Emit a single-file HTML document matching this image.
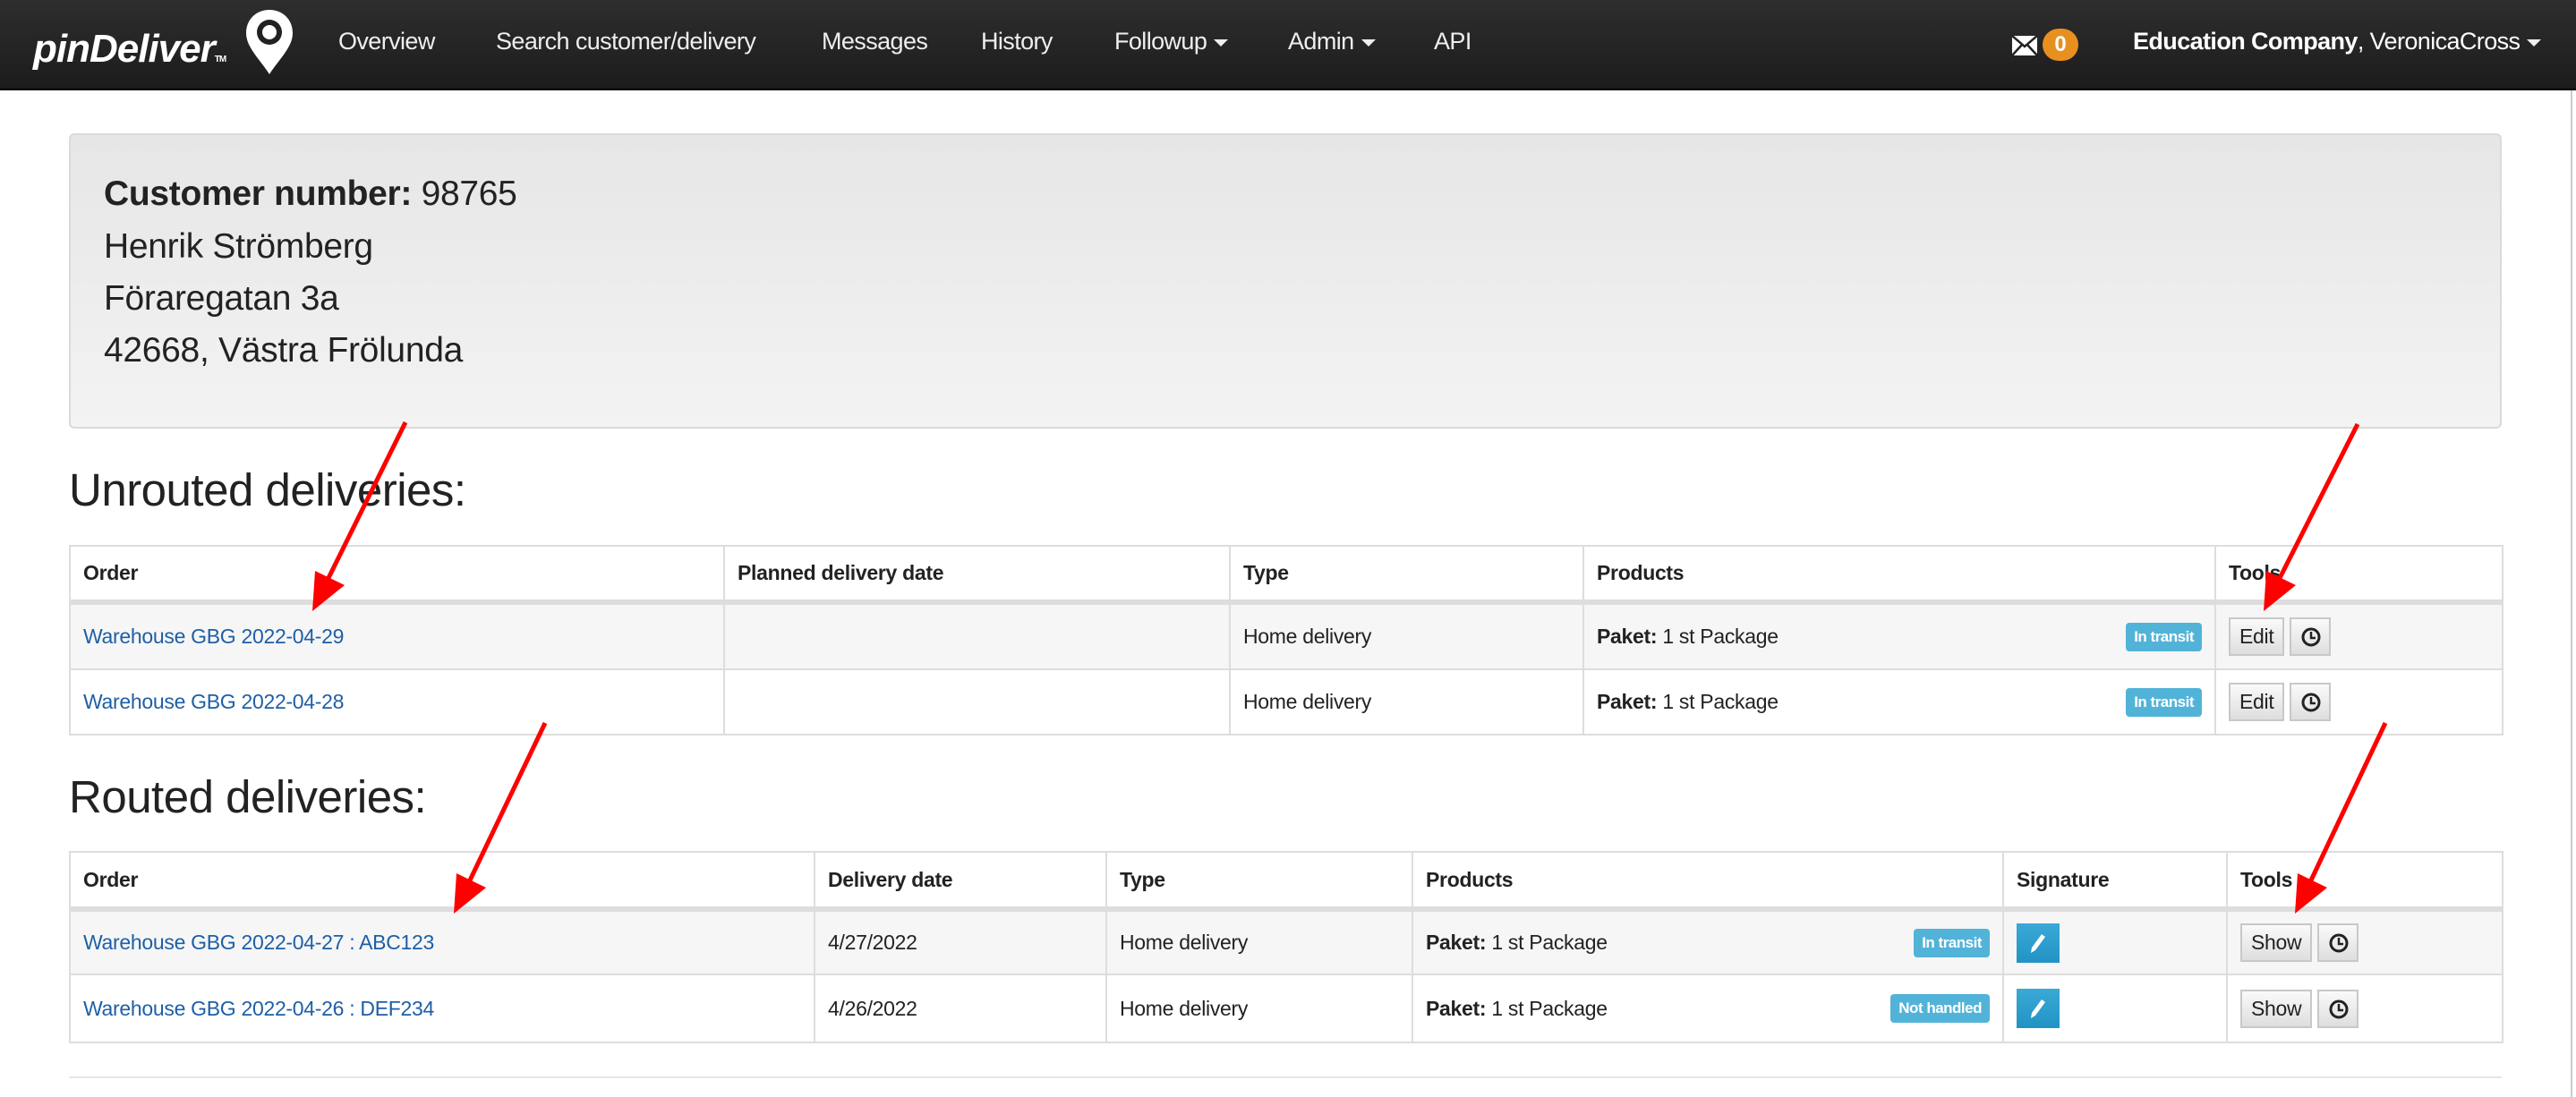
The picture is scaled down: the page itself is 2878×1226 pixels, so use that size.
<!DOCTYPE html>
<html><head><meta charset="utf-8"><style>
*{box-sizing:border-box;margin:0;padding:0}
body{width:2878px;height:1226px;background:#fff;font-family:"Liberation Sans",sans-serif;color:#222;position:relative;overflow:hidden}
.nav{position:absolute;left:0;top:0;width:2878px;height:101px;background:linear-gradient(#2e2e2e,#1c1c1c);border-bottom:2px solid #000}
.nav .it{position:absolute;top:31px;font-size:27px;color:#eee;letter-spacing:-0.6px}
.caret{display:inline-block;width:0;height:0;border-left:8px solid transparent;border-right:8px solid transparent;border-top:8px solid #eee;vertical-align:middle;margin-left:8px}
.logo{position:absolute;left:37px;top:30px;font-size:44px;font-weight:bold;font-style:italic;color:#fff;letter-spacing:-1px}
.well{position:absolute;left:77px;top:149px;width:2718px;height:330px;background:linear-gradient(#e6e6e6,#f3f3f3);border:2px solid #dadada;border-radius:6px}
.well div{position:absolute;left:37px;font-size:39px;color:#222;letter-spacing:-0.3px}
h2{position:absolute;left:77px;font-size:51px;font-weight:normal;color:#222;letter-spacing:-0.5px}
table{position:absolute;left:77px;width:2718px;border-collapse:collapse;table-layout:fixed;font-size:23px;letter-spacing:-0.3px}
td,th{border:2px solid #ddd;padding:0 14px;text-align:left;vertical-align:middle;white-space:nowrap;position:relative}
th{font-weight:bold;border-bottom-width:6px}
a{color:#1e5fa6;text-decoration:none}
.lbl{position:absolute;right:14px;top:50%;transform:translateY(-50%);background:#52b3d9;color:#fff;font-weight:bold;font-size:17px;padding:6px 9px;border-radius:4px;letter-spacing:-0.5px}
.btn{display:inline-block;height:43px;line-height:39px;border:2px solid #c8c8c8;background:linear-gradient(#fafafa,#dedede);font-size:23px;padding:0 10px;vertical-align:middle;color:#222}
.clk{display:inline-block;width:46px;height:43px;border:2px solid #c8c8c8;background:linear-gradient(#fafafa,#dedede);vertical-align:middle;margin-left:6px;position:relative}
.clk svg{position:absolute;left:11px;top:9px}
.pen{display:inline-block;width:48px;height:44px;background:linear-gradient(#3aa9d6,#2193c4);vertical-align:middle;position:relative}
.pen svg{position:absolute;left:12px;top:9px}
</style></head><body>
<div class="nav">
 <div class="logo">pinDeliver<span style="font-size:10px;font-style:normal">TM</span></div>
 <svg style="position:absolute;left:272px;top:9px" width="58" height="76" viewBox="0 0 58 76"><path d="M29 2C14 2 3 13 3 28c0 16 16 30 26 46C39 58 55 44 55 28 55 13 44 2 29 2z" fill="#fff"/><circle cx="29" cy="27" r="14" fill="#222"/><circle cx="29" cy="27" r="8" fill="#fff"/></svg>
 <span class="it" style="left:378px">Overview</span>
 <span class="it" style="left:554px">Search customer/delivery</span>
 <span class="it" style="left:918px">Messages</span>
 <span class="it" style="left:1096px">History</span>
 <span class="it" style="left:1245px">Followup<span class="caret"></span></span>
 <span class="it" style="left:1439px">Admin<span class="caret"></span></span>
 <span class="it" style="left:1602px">API</span>
 <svg style="position:absolute;left:2248px;top:40px" width="28" height="22" viewBox="0 0 28 22"><rect x="0" y="0" width="28" height="22" fill="#fff"/><path d="M0 0L14 12L28 0M0 22L11 10M28 22L17 10" stroke="#222" stroke-width="2.5" fill="none"/></svg>
 <span style="position:absolute;left:2282px;top:32px;width:40px;height:36px;border-radius:18px;background:#e8901f;color:#fff;font-weight:bold;font-size:24px;text-align:center;line-height:36px">0</span>
 <span class="it" style="left:2383px;color:#fff"><b>Education Company</b>, VeronicaCross<span class="caret"></span></span>
</div>
<div style="position:absolute;left:2872px;top:101px;width:2px;height:1125px;background:#ccc"></div>

<div class="well">
 <div style="top:44px"><b>Customer number:</b> 98765</div>
 <div style="top:103px">Henrik Strömberg</div>
 <div style="top:161px">Föraregatan 3a</div>
 <div style="top:219px">42668, Västra Frölunda</div>
</div>

<h2 style="top:518px">Unrouted deliveries:</h2>
<table style="top:609px">
<colgroup><col style="width:731px"><col style="width:565px"><col style="width:395px"><col style="width:706px"><col style="width:321px"></colgroup>
<tr style="height:63px"><th>Order</th><th>Planned delivery date</th><th>Type</th><th>Products</th><th>Tools</th></tr>
<tr style="height:75px;background:#f6f6f6"><td><a>Warehouse GBG 2022-04-29</a></td><td></td><td>Home delivery</td><td><b>Paket:</b> 1 st Package<span class="lbl">In transit</span></td><td><span class="btn">Edit</span><span class="clk"><svg width="22" height="22" viewBox="0 0 22 22"><circle cx="11" cy="11" r="9" fill="none" stroke="#222" stroke-width="3"/><path d="M11 5v7h5" fill="none" stroke="#222" stroke-width="2.5"/></svg></span></td></tr>
<tr style="height:73px"><td><a>Warehouse GBG 2022-04-28</a></td><td></td><td>Home delivery</td><td><b>Paket:</b> 1 st Package<span class="lbl">In transit</span></td><td><span class="btn">Edit</span><span class="clk"><svg width="22" height="22" viewBox="0 0 22 22"><circle cx="11" cy="11" r="9" fill="none" stroke="#222" stroke-width="3"/><path d="M11 5v7h5" fill="none" stroke="#222" stroke-width="2.5"/></svg></span></td></tr>
</table>

<h2 style="top:861px">Routed deliveries:</h2>
<table style="top:951px">
<colgroup><col style="width:832px"><col style="width:326px"><col style="width:342px"><col style="width:660px"><col style="width:250px"><col style="width:308px"></colgroup>
<tr style="height:64px"><th>Order</th><th>Delivery date</th><th>Type</th><th>Products</th><th>Signature</th><th>Tools</th></tr>
<tr style="height:73px;background:#f6f6f6"><td><a>Warehouse GBG 2022-04-27 : ABC123</a></td><td>4/27/2022</td><td>Home delivery</td><td><b>Paket:</b> 1 st Package<span class="lbl">In transit</span></td><td><span class="pen"><svg width="24" height="26" viewBox="0 0 24 26"><path d="M16 3l4 3-11 15-5 3 1-6z" fill="#fff"/></svg></span></td><td><span class="btn">Show</span><span class="clk"><svg width="22" height="22" viewBox="0 0 22 22"><circle cx="11" cy="11" r="9" fill="none" stroke="#222" stroke-width="3"/><path d="M11 5v7h5" fill="none" stroke="#222" stroke-width="2.5"/></svg></span></td></tr>
<tr style="height:76px"><td><a>Warehouse GBG 2022-04-26 : DEF234</a></td><td>4/26/2022</td><td>Home delivery</td><td><b>Paket:</b> 1 st Package<span class="lbl">Not handled</span></td><td><span class="pen"><svg width="24" height="26" viewBox="0 0 24 26"><path d="M16 3l4 3-11 15-5 3 1-6z" fill="#fff"/></svg></span></td><td><span class="btn">Show</span><span class="clk"><svg width="22" height="22" viewBox="0 0 22 22"><circle cx="11" cy="11" r="9" fill="none" stroke="#222" stroke-width="3"/><path d="M11 5v7h5" fill="none" stroke="#222" stroke-width="2.5"/></svg></span></td></tr>
</table>
<div style="position:absolute;left:77px;top:1203px;width:2718px;height:2px;background:#e6e6e6"></div>

<svg style="position:absolute;left:0;top:0" width="2878" height="1226">
<g stroke="#f00" stroke-width="5">
<line x1="453" y1="472" x2="365" y2="650"/>
<line x1="2634" y1="474" x2="2545" y2="650"/>
<line x1="609" y1="808" x2="523" y2="988"/>
<line x1="2665" y1="808" x2="2580" y2="988"/>
</g>
<g fill="#f00">
<path d="M349 683L352 638L385 654z"/>
<path d="M2529 683L2532 638L2565 654z"/>
<path d="M507 1021L510 976L543 992z"/>
<path d="M2564 1021L2567 976L2600 992z"/>
</g></svg>
</body></html>
